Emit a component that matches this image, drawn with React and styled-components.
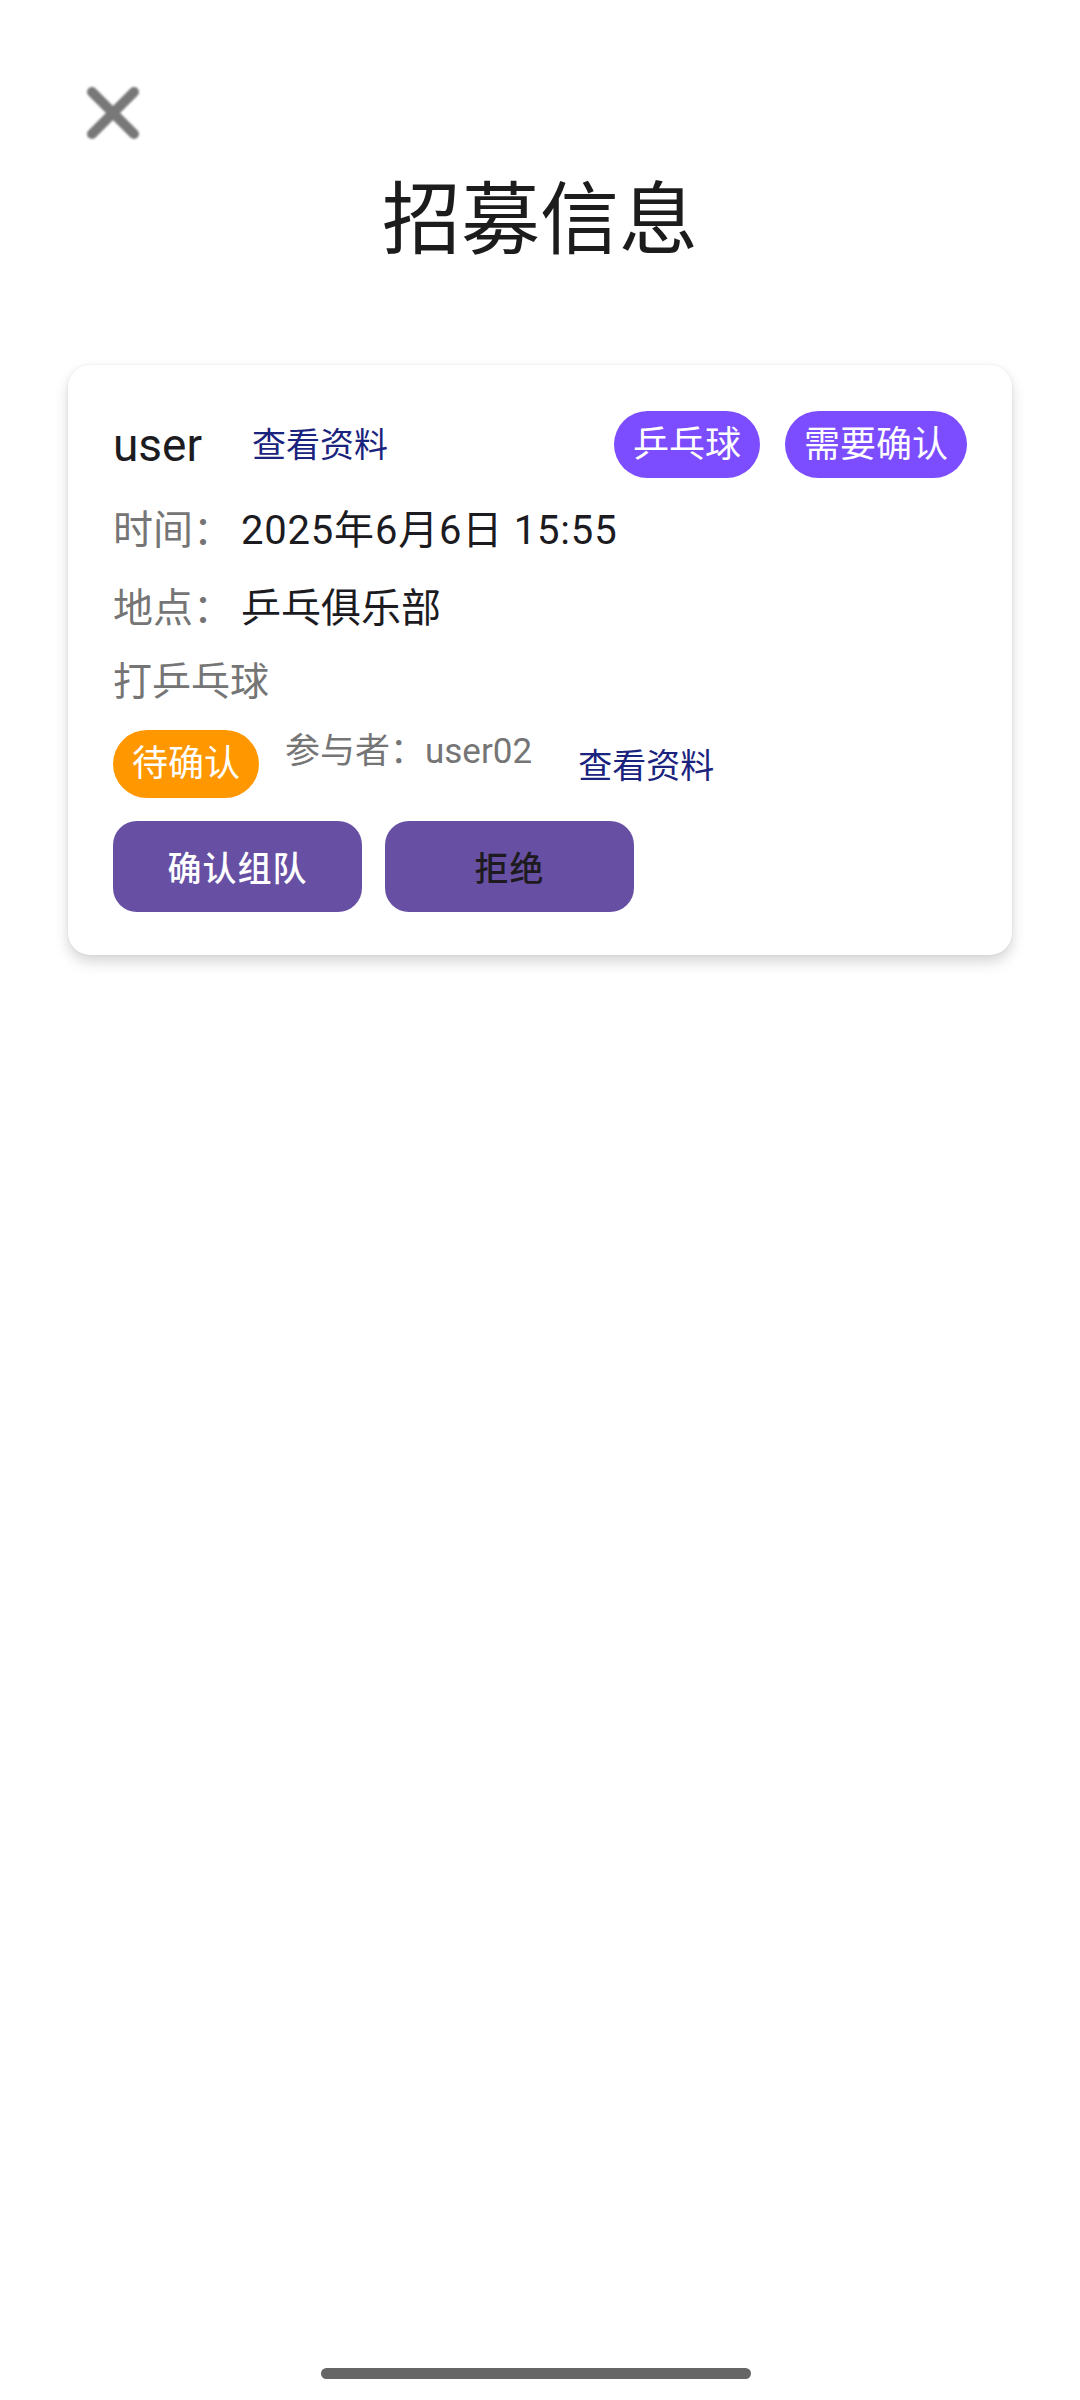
import React from "react";
import styled, { createGlobalStyle } from "styled-components";

const GlobalStyle = createGlobalStyle`
  html, body {
    margin: 0;
    padding: 0;
    background: #ffffff;
  }
  body {
    font-family: Roboto, "Noto Sans CJK SC", "Noto Sans", sans-serif;
    color: #1c1b1f;
  }
  * { box-sizing: border-box; }
`;

const Page = styled.div`
  width: 1080px;
  min-height: 2400px;
  display: flex;
  flex-direction: column;
  background: #fff;
`;

const CloseButton = styled.button`
  display: flex;
  align-items: center;
  justify-content: center;
  width: 56px;
  height: 56px;
  margin: 85px 0 0 85px;
  padding: 0;
  border: none;
  background: transparent;
  svg {
    display: block;
    filter: blur(0.9px);
  }
`;

const Title = styled.h1`
  margin: 33px 0 0;
  font-size: 79px;
  line-height: 95px;
  font-weight: 400;
  text-align: center;
  color: #1c1c1c;
  letter-spacing: 0;
`;

const Card = styled.section`
  margin: 96px 68px 0;
  padding: 46px 45px 43px 45px;
  background: #fff;
  border-radius: 22px;
  box-shadow: 0 7px 14px rgba(0, 0, 0, 0.16), 0 0 3px rgba(0, 0, 0, 0.08);
  display: flex;
  flex-direction: column;
`;

const HeaderRow = styled.div`
  display: flex;
  align-items: center;
  height: 67px;
`;

const UserName = styled.span`
  font-size: 46px;
  line-height: 56px;
  color: #1c1b1f;
`;

const Link = styled.span`
  font-size: 34px;
  line-height: 48px;
  color: #1a237e;
  margin-left: ${(p) => p.$ml || 0}px;
  margin-top: ${(p) => p.$mt || 0}px;
`;

const Spacer = styled.div`
  flex: 1;
`;

const Badge = styled.span`
  display: inline-flex;
  align-items: center;
  justify-content: center;
  height: ${(p) => p.$h || 67}px;
  padding: 0 19px;
  border-radius: 34px;
  background: ${(p) => p.$bg};
  color: #fff;
  font-size: 36px;
  line-height: 1;
  margin-left: ${(p) => p.$ml || 0}px;
  flex-shrink: 0;
`;

const InfoRow = styled.div`
  display: flex;
  align-items: center;
  margin-top: ${(p) => p.$mt}px;
  font-size: 40px;
  line-height: 56px;
`;

const Label = styled.span`
  color: #757575;
  margin-right: 8px;
`;

const Value = styled.span`
  color: #1c1b1f;
  font-size: 40px;
  letter-spacing: ${(p) => p.$ls || 0}px;
`;

const Description = styled.p`
  margin: 17px 0 0;
  font-size: 39px;
  line-height: 56px;
  color: #757575;
`;

const ParticipantRow = styled.div`
  display: flex;
  align-items: flex-start;
  margin-top: 20px;
`;

const Participant = styled.span`
  margin-left: 26px;
  font-size: 35px;
  line-height: 44px;
  color: #757575;
`;

const ButtonRow = styled.div`
  display: flex;
  gap: 23px;
  margin-top: 23px;
`;

const ActionButton = styled.button`
  width: 249px;
  height: 91px;
  border: none;
  border-radius: 24px;
  background: #6750a4;
  color: ${(p) => p.$fg};
  font-family: Roboto, "Noto Sans CJK SC", sans-serif;
  font-size: 34px;
  font-weight: 500;
  letter-spacing: 1px;
  padding: 0;
`;

const GestureBar = styled.div`
  width: 430px;
  height: 11px;
  border-radius: 6px;
  background: #666666;
  margin: auto 0 21px 321px;
`;

function CloseIcon() {
  return (
    <svg width="56" height="56" viewBox="0 0 56 56">
      <path
        d="M7 7 L49 49 M49 7 L7 49"
        stroke="#787878"
        strokeWidth="10"
        strokeLinecap="round"
        fill="none"
      />
    </svg>
  );
}

export default function App() {
  return (
    <>
      <GlobalStyle />
      <Page>
        <CloseButton aria-label="关闭">
          <CloseIcon />
        </CloseButton>
        <Title>招募信息</Title>
        <Card>
          <HeaderRow>
            <UserName>user</UserName>
            <Link $ml={50}>查看资料</Link>
            <Spacer />
            <Badge $bg="#7c4dff">乒乓球</Badge>
            <Badge $bg="#7c4dff" $ml={25}>需要确认</Badge>
          </HeaderRow>
          <InfoRow $mt={25}>
            <Label>时间：</Label>
            <Value $ls={0.8}>2025年6月6日 15:55</Value>
          </InfoRow>
          <InfoRow $mt={22}>
            <Label>地点：</Label>
            <Value>乒乓俱乐部</Value>
          </InfoRow>
          <Description>打乒乓球</Description>
          <ParticipantRow>
            <Badge $bg="#ff9800" $h={68}>待确认</Badge>
            <Participant>参与者：user02</Participant>
            <Link $ml={46} $mt={12}>查看资料</Link>
          </ParticipantRow>
          <ButtonRow>
            <ActionButton $fg="#ffffff">确认组队</ActionButton>
            <ActionButton $fg="#1d1b20">拒绝</ActionButton>
          </ButtonRow>
        </Card>
        <GestureBar />
      </Page>
    </>
  );
}
